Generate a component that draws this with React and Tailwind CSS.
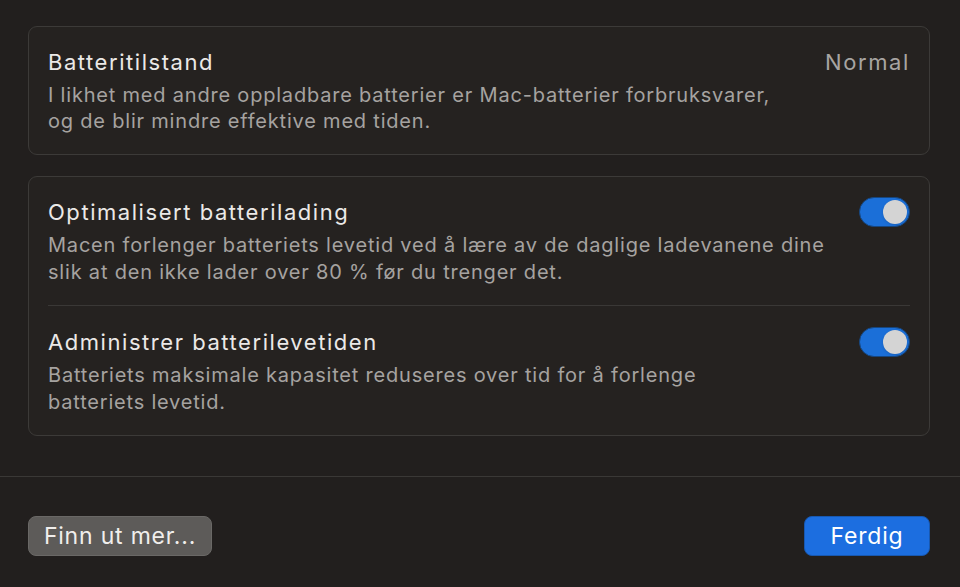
import { useState } from "react";

const font = { fontFamily: "Inter, 'Noto Sans', sans-serif" };

function Toggle({ on, onChange }) {
  return (
    <button
      onClick={() => onChange(!on)}
      className={`relative w-[51px] h-[30px] rounded-full shrink-0 border border-[#16467f] ${on ? "bg-[#1b6fd8]" : "bg-[#4a4846]"}`}
    >
      <span
        className={`absolute top-[2px] w-[24px] h-[24px] rounded-full bg-[#d4d4d4] shadow ${on ? "left-[23px]" : "left-[2px]"}`}
      />
    </button>
  );
}

function Row({ title, text, right, tight }) {
  return (
    <div className="flex items-start justify-between gap-6">
      <div>
        <h3 className="text-[22px] leading-[28px] tracking-[1.55px] text-[#ebe9e7]">{title}</h3>
        <p className={`mt-[6px] text-[20px] tracking-[0.8px] text-[#a6a3a0] ${tight ? "leading-[26px]" : "leading-[27px]"}`}>{text}</p>
      </div>
      {right}
    </div>
  );
}

export default function App() {
  const [optimized, setOptimized] = useState(true);
  const [manage, setManage] = useState(true);

  return (
    <div className="w-[960px] h-[587px] bg-[#221f1e] flex flex-col overflow-hidden" style={font}>
      {/* INNHOLD */}
      <div className="pl-[28px] pr-[30px] pt-[26px] flex flex-col gap-[21px]">
        <section className="rounded-[9px] border border-[#3c3a38] bg-[#252220] pl-[19px] pr-[19px] pt-[21px] pb-[20px]">
          <Row
            tight
            title="Batteritilstand"
            text={<>I likhet med andre oppladbare batterier er Mac-batterier forbruksvarer,<br />og de blir mindre effektive med tiden.</>}
            right={<span className="text-[22px] leading-[28px] tracking-[1.6px] text-[#a8a5a2]">Normal</span>}
          />
        </section>

        <section className="rounded-[9px] border border-[#3c3a38] bg-[#252220] pl-[19px] pr-[19px]">
          <div className="pt-[21px] pb-[19px] border-b border-[#3a3836]">
            <Row
              title="Optimalisert batterilading"
              text={<>Macen forlenger batteriets levetid ved å lære av de daglige ladevanene dine<br />slik at den ikke lader over 80 % før du trenger det.</>}
              right={<div className="mt-[-1px]"><Toggle on={optimized} onChange={setOptimized} /></div>}
            />
          </div>
          <div className="pt-[22px] pb-[19px]">
            <Row
              title="Administrer batterilevetiden"
              text={<>Batteriets maksimale kapasitet reduseres over tid for å forlenge<br />batteriets levetid.</>}
              right={<div className="mt-[-1px]"><Toggle on={manage} onChange={setManage} /></div>}
            />
          </div>
        </section>
      </div>

      {/* BUNN */}
      <div className="mt-[40px] border-t border-[#3a3836] flex items-center justify-between pl-[28px] pr-[30px] pt-[39px]">
        <button className="h-[40px] w-[184px] rounded-[8px] bg-[#5d5b59] text-[#f0eeec] text-[23px] tracking-[0.8px] border border-[#6a6866]">
          Finn ut mer...
        </button>
        <button className="h-[40px] w-[126px] rounded-[8px] bg-[#1c6ee0] text-white text-[23px] tracking-[0.8px] border border-[#1858b0]">
          Ferdig
        </button>
      </div>
    </div>
  );
}
